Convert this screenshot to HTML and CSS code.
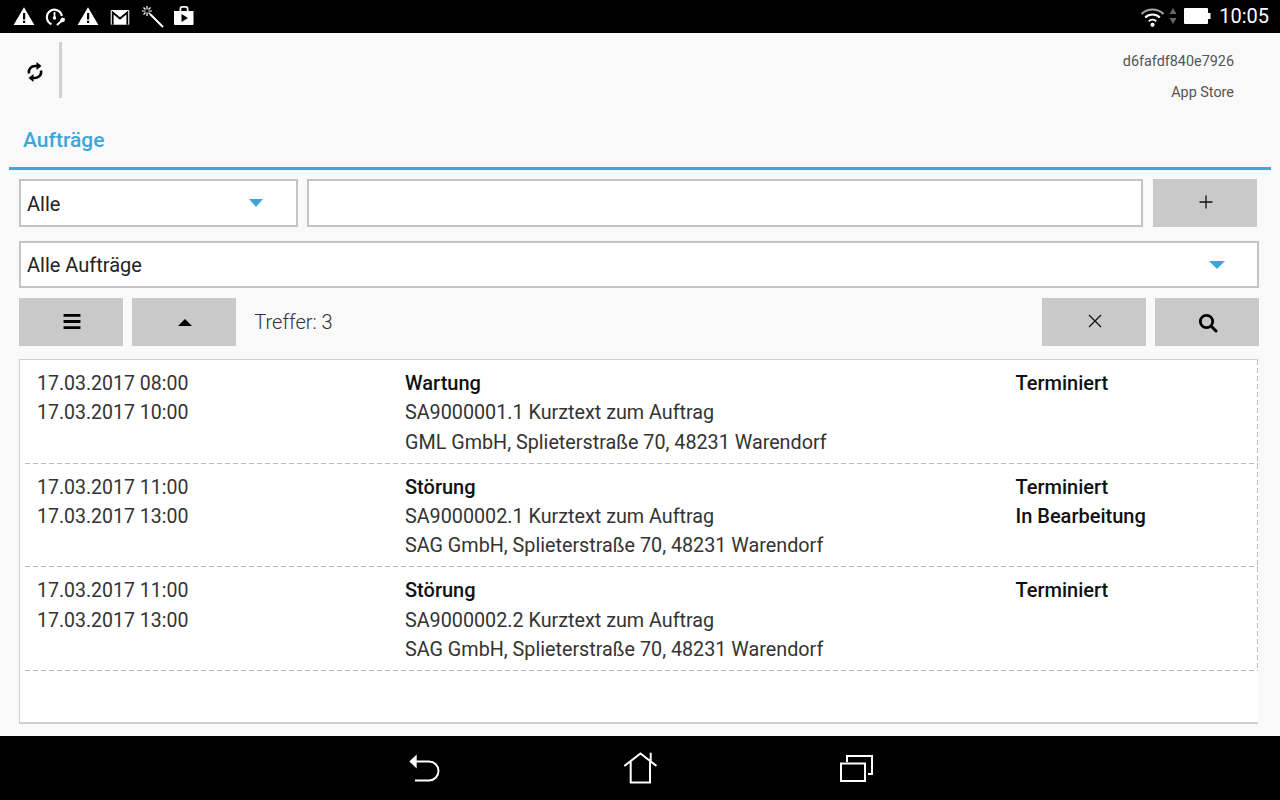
FILE: index.html
```html
<!DOCTYPE html>
<html lang="de">
<head>
<meta charset="utf-8">
<title>Aufträge</title>
<link rel="stylesheet" href="styles.css">
</head>
<body>
<div class="device">
  <div class="statusbar">
    <div class="status-icons">
      <svg class="si" viewBox="0 0 24 24"><path fill="#fff" d="M12 3.300 22.400 21H1.600Z"/><path fill="#000" d="M11 9h2.200v6.500H11zM11 16.700h2.200v2.200H11z"/></svg>
      <svg class="si" viewBox="0 0 24 24"><path fill="none" stroke="#fff" stroke-width="2.200" d="M7.500 20.200A7.500 7.500 0 1 1 17.800 12"/><path fill="none" stroke="#fff" stroke-width="1.800" d="M10.500 13.500V8"/><circle cx="10.500" cy="14" r="1.700" fill="#fff"/><path fill="none" stroke="#fff" stroke-width="2" stroke-linecap="round" d="M13.500 20.500l4-3.500"/><path fill="#fff" d="M18 13.500l3 1-.5 3-3 1-1.500-2.500Z"/></svg>
      <svg class="si" viewBox="0 0 24 24"><path fill="#fff" d="M12 3.300 22.400 21H1.600Z"/><path fill="#000" d="M11 9h2.200v6.500H11zM11 16.700h2.200v2.200H11z"/></svg>
      <svg class="si" viewBox="0 0 24 24"><rect x="2.700" y="6" width="18.600" height="14.700" rx="1" fill="#fff"/><path fill="none" stroke="#000" stroke-width="1.800" d="M4.700 20.700V8.500l7.300 6 7.300-6v12.200"/></svg>
      <svg class="si" viewBox="0 0 24 24"><path stroke="#fff" stroke-width="2" d="M10 10 23 23"/><path stroke="#fff" stroke-width="1.200" d="M7 2v3.500M7 8.500V12M2 7h3.500M8.500 7H12M3.500 3.500 5.500 5.500M8.500 8.500l1.500 1.500M10.500 3.500 8.500 5.500M3.500 10.500l2-2"/></svg>
      <svg class="si" viewBox="0 0 24 24"><path fill="#fff" d="M2 7H7.500V5a3 3 0 0 1 3-3h3a3 3 0 0 1 3 3v2H21.500v13a1 1 0 0 1-1 1H3a1 1 0 0 1-1-1Z"/><path fill="#000" d="M9.200 7V5a1.300 1.300 0 0 1 1.300-1.300h3A1.300 1.300 0 0 1 14.800 5v2ZM9.500 10l6.500 4-6.500 4Z"/></svg>
    </div>
    <div class="status-right">
      <svg class="wifi" viewBox="0 0 24 20"><path fill="none" stroke="#aaa" stroke-width="2" d="M1.500 7.500a15 15 0 0 1 21 0"/><path fill="none" stroke="#fff" stroke-width="2" d="M5 11a10 10 0 0 1 14 0"/><path fill="none" stroke="#fff" stroke-width="2" d="M8.500 14.500a5 5 0 0 1 7 0"/><circle cx="12" cy="18" r="2" fill="#fff"/></svg>
      <svg class="updown" viewBox="0 0 8 18"><path fill="#666" d="M4 1l3.500 6h-7ZM4 17l3.500-6h-7Z"/></svg>
      <svg class="battery" viewBox="0 0 27 18"><rect x="0" y="1" width="24" height="16" rx="1" fill="#fff"/><rect x="24" y="6" width="2.500" height="6" fill="#fff"/></svg>
      <span class="clock">10:05</span>
    </div>
  </div>

  <main class="app">
    <header class="topbar">
      <button class="sync" type="button" aria-label="Synchronisieren">
        <svg viewBox="0 0 18 22" width="18" height="22"><path fill="none" stroke="#000" stroke-width="2.500" d="M3 12.500C2 8 5.500 5 9 5h2M15 9.500C16 14 12.500 17 9 17H7"/><path fill="#000" d="M10.500 1l5 4-5 4ZM7.500 13l-5 4 5 4Z"/></svg>
      </button>
      <div class="topbar-sep"></div>
      <div class="device-info">
        <div>d6fafdf840e7926</div>
        <div>App Store</div>
      </div>
    </header>

    <div class="tabs"><span class="tab">Aufträge</span></div>

    <div class="filters">
      <div class="row row-a">
        <div class="select select-small"><span class="select-text">Alle</span><i class="caret caret-small"></i></div>
        <div class="field"></div>
        <button class="btn" type="button"><svg class="ic ic-raised" viewBox="0 0 14 14"><path stroke="#111" stroke-width="1.300" d="M7 .5v13M.5 7h13"/></svg></button>
      </div>
      <div class="row row-b">
        <div class="select select-wide"><span class="select-text">Alle Aufträge</span><i class="caret caret-wide"></i></div>
      </div>
      <div class="row row-c">
        <button class="btn" type="button"><svg class="ic-menu" viewBox="0 0 18 16"><path fill="#000" d="M0 0h18v3H0zM0 6.500h18v3H0zM0 13h18v3H0z"/></svg></button>
        <button class="btn" type="button"><svg class="ic-up" viewBox="0 0 14 7"><path fill="#000" d="M7 0l7 7H0Z"/></svg></button>
        <span class="hits">Treffer: 3</span>
        <button class="btn btn-right" type="button"><svg class="ic ic-raised" viewBox="0 0 14 14"><path stroke="#111" stroke-width="1.300" d="M1 1l12 12M13 1 1 13"/></svg></button>
        <button class="btn" type="button"><svg class="ic-search" viewBox="0 0 20 20"><circle cx="8.500" cy="8.500" r="6.200" fill="none" stroke="#000" stroke-width="2.800"/><path stroke="#000" stroke-width="3" stroke-linecap="round" d="M13.500 13.500l4.500 4.500"/></svg></button>
      </div>
    </div>

    <section class="list">
      <article class="item">
        <div><div>17.03.2017 08:00</div><div>17.03.2017 10:00</div></div>
        <div class="middle"><div class="strong">Wartung</div><div>SA9000001.1 Kurztext zum Auftrag</div><div>GML GmbH, Splieterstraße 70, 48231 Warendorf</div></div>
        <div><div class="strong">Terminiert</div></div>
      </article>
      <article class="item">
        <div><div>17.03.2017 11:00</div><div>17.03.2017 13:00</div></div>
        <div class="middle"><div class="strong">Störung</div><div>SA9000002.1 Kurztext zum Auftrag</div><div>SAG GmbH, Splieterstraße 70, 48231 Warendorf</div></div>
        <div><div class="strong">Terminiert</div><div class="strong">In Bearbeitung</div></div>
      </article>
      <article class="item">
        <div><div>17.03.2017 11:00</div><div>17.03.2017 13:00</div></div>
        <div class="middle"><div class="strong">Störung</div><div>SA9000002.2 Kurztext zum Auftrag</div><div>SAG GmbH, Splieterstraße 70, 48231 Warendorf</div></div>
        <div><div class="strong">Terminiert</div></div>
      </article>
    </section>
  </main>

  <nav class="navbar">
    <svg class="nav-ic" viewBox="0 0 34 34"><path fill="none" stroke="#fff" stroke-width="2" d="M8 10.500H22A9.500 9.500 0 0 1 22 29.500H8"/><path fill="#fff" d="M2.300 10.500 9.700 3.500V17.500Z"/></svg>
    <svg class="nav-ic" viewBox="0 0 34 34"><path fill="none" stroke="#fff" stroke-width="2" d="M1.300 15 17.500 2.500 33.500 15M7.700 10.500V31.500H27V10.500M27.700 1.700V11"/></svg>
    <svg class="nav-ic" viewBox="0 0 34 34"><path fill="none" stroke="#fff" stroke-width="2" d="M2 12.500H26V30H2ZM8 11V5H33V23H29"/></svg>
  </nav>
</div>
</body>
</html>
```

FILE: styles.css
```css
* { box-sizing: border-box; }

html, body {
  margin: 0;
  padding: 0;
  background: #000;
}

body {
  font-family: Roboto, "Liberation Sans", sans-serif;
  font-size: 20px;
  color: #333;
}

.device {
  width: 1280px;
  height: 800px;
  display: flex;
  flex-direction: column;
  overflow: hidden;
}

.statusbar {
  height: 33px;
  flex: none;
  background: #000;
  display: flex;
  align-items: center;
  justify-content: space-between;
  padding: 0 11px 1px 12px;
}

.status-icons {
  display: flex;
  gap: 8px;
}

.si {
  width: 24px;
  height: 24px;
  display: block;
}

.status-right {
  display: flex;
  align-items: center;
}

.wifi { width: 25px; height: 21px; }
.updown { width: 8px; height: 18px; margin-left: 4px; }
.battery { width: 27px; height: 18px; margin-left: 7px; }

.clock {
  color: #fff;
  font-size: 20px;
  margin-left: 8px;
}

.app {
  flex: 1;
  min-height: 0;
  background: #f9f9f9;
}

.topbar {
  height: 75px;
  display: flex;
}

.sync {
  width: 59px;
  height: 59px;
  margin-top: 9px;
  padding: 1px 0 0 11px;
  background: none;
  border: 0;
  display: flex;
  align-items: center;
  justify-content: center;
}

.topbar-sep {
  width: 3px;
  height: 56px;
  margin-top: 9px;
  background: #d0d0d0;
}

.device-info {
  margin-left: auto;
  padding: 13px 46px 0 0;
  text-align: right;
  font-size: 14.400px;
  line-height: 31px;
  color: #555;
}

.tabs {
  height: 62px;
  margin: 0 9px;
  padding: 16px 0 0 14px;
  border-bottom: 3px solid #3ba7d8;
}

.tab {
  font-size: 21px;
  line-height: 32px;
  font-weight: 500;
  color: #3ba7d8;
}

.filters {
  padding: 9.330px 20.670px 0 18.670px;
}

.row {
  display: flex;
}

.row-a { height: 47.670px; gap: 9.330px; padding-right: 2.660px; }
.row-b { height: 47.330px; margin-top: 13.670px; }
.row-c { height: 48px; margin-top: 10px; gap: 9.330px; align-items: center; }

.select,
.field {
  border: 2px solid #c4c4c4;
  background: #fff;
}

.select {
  display: flex;
  align-items: center;
  justify-content: space-between;
  padding: 0 33px 0 6.330px;
  color: #222;
}

.select-text { padding-top: 2px; }

.select-small { width: 279.330px; }
.select-wide { width: 100%; }

.field { flex: 1; }

.caret {
  width: 0;
  height: 0;
  border-left: 8px solid transparent;
  border-right: 8px solid transparent;
  border-top: 8px solid #3ba7d8;
}

.caret-small {
  border-left-width: 7px;
  border-right-width: 7px;
}

.caret-wide { margin-top: 1px; margin-right: -1px; }

.btn {
  width: 104px;
  height: 48px;
  flex: none;
  padding: 0 0 0 2px;
  background: #c9c9c9;
  border: 0;
  display: flex;
  align-items: center;
  justify-content: center;
}

.ic { width: 14px; height: 14px; }
.ic-raised { margin-bottom: 2px; }
.ic-menu { width: 18px; height: 15px; }
.ic-up { width: 14px; height: 7px; margin-top: 1px; }
.ic-search { width: 20px; height: 20px; margin-top: 2px; }

.hits {
  margin-left: 9px;
  font-weight: 300;
  color: #333;
}

.btn-right { margin-left: auto; }

.list {
  height: 365px;
  margin: 13px 22px 0 19px;
  padding-left: 5px;
  background: #fff;
  border: solid #d0d0d0;
  border-width: 1px 0 2px 1px;
}

.item {
  height: 103.700px;
  padding: 9px 0 0 12px;
  display: grid;
  grid-template-columns: 368px 610.500px 1fr;
  font-size: 19.500px;
  line-height: 29.300px;
  color: #333;
  background:
    repeating-linear-gradient(90deg, #bbb 0 5px, transparent 5px 8px) left bottom / 100% 1px no-repeat,
    repeating-linear-gradient(180deg, #bbb 0 5px, transparent 5px 8px) right top / 1px 100% no-repeat;
}

.middle { font-size: 19.750px; }

.strong {
  font-size: 20px;
  font-weight: 500;
  color: #111;
}

.navbar {
  height: 64px;
  flex: none;
  background: #000;
  display: flex;
  justify-content: center;
  align-items: center;
  gap: 182px;
}

.nav-ic {
  width: 34px;
  height: 34px;
  display: block;
}
```
